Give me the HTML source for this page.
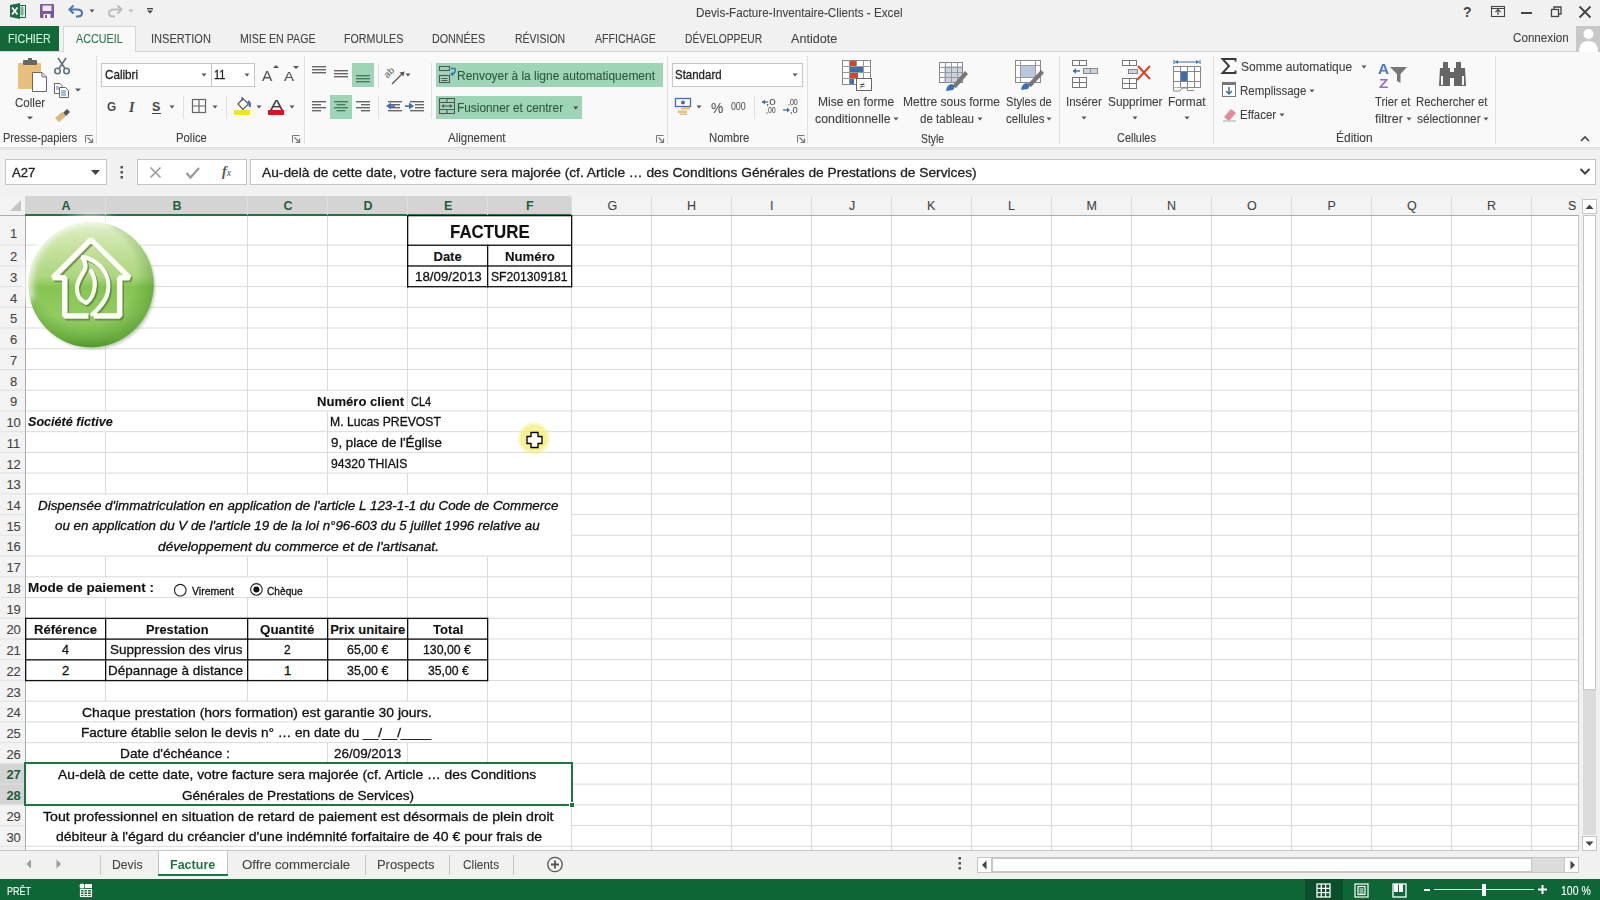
<!DOCTYPE html>
<html><head><meta charset="utf-8"><title>Excel</title>
<style>
html,body{margin:0;padding:0;}
body{width:1600px;height:900px;overflow:hidden;position:relative;background:#f1f1f1;font-family:'Liberation Sans', sans-serif;}
.t{position:absolute;white-space:nowrap;line-height:0;transform-origin:0 0;}
svg{overflow:visible}
</style></head><body>
<div style="position:absolute;left:0px;top:0px;width:1600px;height:26px;background:#f1f1f1"></div>
<div style="position:absolute;left:0px;top:26px;width:1600px;height:26px;background:#f1f1f1"></div>
<div style="position:absolute;left:0px;top:51px;width:1600px;height:1px;background:#d6d6d6"></div>
<div style="position:absolute;left:0px;top:52px;width:1600px;height:96px;background:#f9f9f9"></div>
<div style="position:absolute;left:0px;top:147px;width:1600px;height:1px;background:#dcdcdc"></div>
<div style="position:absolute;left:0px;top:148px;width:1600px;height:2px;background:#e8e8e8"></div>
<div style="position:absolute;left:0px;top:150px;width:1600px;height:46px;background:#f1f1f1"></div>
<div class="t" style="left:695.70px;top:13.34px;font-size:12px;font-weight:normal;font-style:normal;color:#444;transform:scaleX(0.9740);-webkit-text-stroke:0.1px #444;">Devis-Facture-Inventaire-Clients - Excel</div>
<div style="position:absolute;left:0px;top:26px;width:59px;height:25px;background:#11693a"></div>
<div class="t" style="left:7.68px;top:39.25px;font-size:13px;font-weight:normal;font-style:normal;color:#d6f3df;transform:scaleX(0.8200);-webkit-text-stroke:0.1px #d6f3df;">FICHIER</div>
<div style="position:absolute;left:63px;top:26px;width:73px;height:26px;background:#f9f9f9;border:1px solid #d6d6d6;border-bottom:none;box-sizing:border-box"></div>
<div class="t" style="left:76.00px;top:39.25px;font-size:13px;font-weight:normal;font-style:normal;color:#2b7a4b;transform:scaleX(0.8286);-webkit-text-stroke:0.1px #2b7a4b;">ACCUEIL</div>
<div class="t" style="left:150.90px;top:39.25px;font-size:13px;font-weight:normal;font-style:normal;color:#444;transform:scaleX(0.8495);-webkit-text-stroke:0.1px #444;">INSERTION</div>
<div class="t" style="left:239.68px;top:39.25px;font-size:13px;font-weight:normal;font-style:normal;color:#444;transform:scaleX(0.8192);-webkit-text-stroke:0.1px #444;">MISE EN PAGE</div>
<div class="t" style="left:344.18px;top:39.25px;font-size:13px;font-weight:normal;font-style:normal;color:#444;transform:scaleX(0.8210);-webkit-text-stroke:0.1px #444;">FORMULES</div>
<div class="t" style="left:432.17px;top:39.25px;font-size:13px;font-weight:normal;font-style:normal;color:#444;transform:scaleX(0.8252);-webkit-text-stroke:0.1px #444;">DONNÉES</div>
<div class="t" style="left:514.69px;top:39.25px;font-size:13px;font-weight:normal;font-style:normal;color:#444;transform:scaleX(0.8068);-webkit-text-stroke:0.1px #444;">RÉVISION</div>
<div class="t" style="left:594.50px;top:39.25px;font-size:13px;font-weight:normal;font-style:normal;color:#444;transform:scaleX(0.8163);-webkit-text-stroke:0.1px #444;">AFFICHAGE</div>
<div class="t" style="left:684.71px;top:39.25px;font-size:13px;font-weight:normal;font-style:normal;color:#444;transform:scaleX(0.7905);-webkit-text-stroke:0.1px #444;">DÉVELOPPEUR</div>
<div class="t" style="left:791.00px;top:39.25px;font-size:13px;font-weight:normal;font-style:normal;color:#444;transform:scaleX(0.9690);-webkit-text-stroke:0.1px #444;">Antidote</div>
<div class="t" style="left:1512.50px;top:38.00px;font-size:13px;font-weight:normal;font-style:normal;color:#444;transform:scaleX(0.8962);-webkit-text-stroke:0.1px #444;">Connexion</div>
<div style="position:absolute;left:0px;top:196px;width:1579px;height:655px;background:#fff"></div>
<div style="position:absolute;left:0px;top:196px;width:1579px;height:20px;background:#f3f3f3"></div>
<div style="position:absolute;left:25px;top:196px;width:546px;height:19px;background:#d4d4d4"></div>
<div style="position:absolute;left:25px;top:214px;width:546px;height:2px;background:#217346"></div>
<div style="position:absolute;left:571px;top:215px;width:1008px;height:1px;background:#ababab"></div>
<div style="position:absolute;left:0px;top:215px;width:25px;height:1px;background:#ababab"></div>
<div style="position:absolute;left:0px;top:216px;width:25px;height:635px;background:#f3f3f3"></div>
<div style="position:absolute;left:25px;top:216px;width:1px;height:635px;background:#ababab"></div>
<div style="position:absolute;left:0px;top:763.85px;width:25px;height:41.460000000000036px;background:#d4d4d4"></div>
<svg style="position:absolute;left:10px;top:200px" width="12" height="12" viewBox="0 0 12 12"><path d="M11 0 L11 11 L0 11 Z" fill="#c4c4c4"/></svg>
<svg style="position:absolute;left:0px;top:0px" width="1600" height="900" viewBox="0 0 1600 900"><g fill="#dadada"><rect x="26" y="244.6" width="1553" height="1"/><rect x="26" y="265.33" width="1553" height="1"/><rect x="26" y="286.06" width="1553" height="1"/><rect x="26" y="306.79" width="1553" height="1"/><rect x="26" y="327.52" width="1553" height="1"/><rect x="26" y="348.25" width="1553" height="1"/><rect x="26" y="368.98" width="1553" height="1"/><rect x="26" y="389.71" width="1553" height="1"/><rect x="26" y="410.44" width="1553" height="1"/><rect x="26" y="431.17" width="1553" height="1"/><rect x="26" y="451.9" width="1553" height="1"/><rect x="26" y="472.63" width="1553" height="1"/><rect x="26" y="493.36" width="1553" height="1"/><rect x="571" y="514.09" width="1008" height="1"/><rect x="571" y="534.82" width="1008" height="1"/><rect x="26" y="555.55" width="1553" height="1"/><rect x="26" y="576.28" width="1553" height="1"/><rect x="26" y="597.01" width="1553" height="1"/><rect x="26" y="617.74" width="1553" height="1"/><rect x="26" y="638.47" width="1553" height="1"/><rect x="26" y="659.2" width="1553" height="1"/><rect x="26" y="679.93" width="1553" height="1"/><rect x="26" y="700.66" width="1553" height="1"/><rect x="26" y="721.39" width="1553" height="1"/><rect x="26" y="742.12" width="1553" height="1"/><rect x="26" y="762.85" width="1553" height="1"/><rect x="571" y="783.58" width="1008" height="1"/><rect x="26" y="804.31" width="1553" height="1"/><rect x="571" y="825.04" width="1008" height="1"/><rect x="26" y="845.77" width="1553" height="1"/><rect x="105" y="216.00" width="1" height="195.44"/><rect x="105" y="432.17" width="1" height="62.19"/><rect x="105" y="556.55" width="1" height="20.73"/><rect x="105" y="598.01" width="1" height="103.65"/><rect x="247" y="216.00" width="1" height="278.36"/><rect x="247" y="556.55" width="1" height="20.73"/><rect x="247" y="598.01" width="1" height="103.65"/><rect x="327" y="216.00" width="1" height="174.71"/><rect x="327" y="411.44" width="1" height="82.92"/><rect x="327" y="556.55" width="1" height="145.11"/><rect x="327" y="743.12" width="1" height="20.73"/><rect x="407" y="216.00" width="1" height="195.44"/><rect x="407" y="473.63" width="1" height="20.73"/><rect x="407" y="556.55" width="1" height="145.11"/><rect x="407" y="743.12" width="1" height="20.73"/><rect x="487" y="245.60" width="1" height="248.76"/><rect x="487" y="556.55" width="1" height="207.30"/><rect x="571" y="216.00" width="1" height="635.00"/><rect x="651" y="216.00" width="1" height="635.00"/><rect x="731" y="216.00" width="1" height="635.00"/><rect x="811" y="216.00" width="1" height="635.00"/><rect x="891" y="216.00" width="1" height="635.00"/><rect x="971" y="216.00" width="1" height="635.00"/><rect x="1051" y="216.00" width="1" height="635.00"/><rect x="1131" y="216.00" width="1" height="635.00"/><rect x="1211" y="216.00" width="1" height="635.00"/><rect x="1291" y="216.00" width="1" height="635.00"/><rect x="1371" y="216.00" width="1" height="635.00"/><rect x="1451" y="216.00" width="1" height="635.00"/><rect x="1531" y="216.00" width="1" height="635.00"/></g></svg>
<svg style="position:absolute;left:0px;top:0px" width="1600" height="900" viewBox="0 0 1600 900"><g fill="#e1e1e1"><rect x="0" y="244.6" width="25" height="1"/><rect x="0" y="265.33" width="25" height="1"/><rect x="0" y="286.06" width="25" height="1"/><rect x="0" y="306.79" width="25" height="1"/><rect x="0" y="327.52" width="25" height="1"/><rect x="0" y="348.25" width="25" height="1"/><rect x="0" y="368.98" width="25" height="1"/><rect x="0" y="389.71" width="25" height="1"/><rect x="0" y="410.44" width="25" height="1"/><rect x="0" y="431.17" width="25" height="1"/><rect x="0" y="451.9" width="25" height="1"/><rect x="0" y="472.63" width="25" height="1"/><rect x="0" y="493.36" width="25" height="1"/><rect x="0" y="514.09" width="25" height="1"/><rect x="0" y="534.82" width="25" height="1"/><rect x="0" y="555.55" width="25" height="1"/><rect x="0" y="576.28" width="25" height="1"/><rect x="0" y="597.01" width="25" height="1"/><rect x="0" y="617.74" width="25" height="1"/><rect x="0" y="638.47" width="25" height="1"/><rect x="0" y="659.2" width="25" height="1"/><rect x="0" y="679.93" width="25" height="1"/><rect x="0" y="700.66" width="25" height="1"/><rect x="0" y="721.39" width="25" height="1"/><rect x="0" y="742.12" width="25" height="1"/><rect x="0" y="762.85" width="25" height="1"/><rect x="0" y="783.58" width="25" height="1"/><rect x="0" y="804.31" width="25" height="1"/><rect x="0" y="825.04" width="25" height="1"/><rect x="0" y="845.77" width="25" height="1"/></g></svg>
<svg style="position:absolute;left:0px;top:0px" width="1600" height="900" viewBox="0 0 1600 900"><g fill="#dcdcdc"><rect x="105" y="197" width="1" height="18"/><rect x="247" y="197" width="1" height="18"/><rect x="327" y="197" width="1" height="18"/><rect x="407" y="197" width="1" height="18"/><rect x="487" y="197" width="1" height="18"/><rect x="571" y="197" width="1" height="18"/><rect x="651" y="197" width="1" height="18"/><rect x="731" y="197" width="1" height="18"/><rect x="811" y="197" width="1" height="18"/><rect x="891" y="197" width="1" height="18"/><rect x="971" y="197" width="1" height="18"/><rect x="1051" y="197" width="1" height="18"/><rect x="1131" y="197" width="1" height="18"/><rect x="1211" y="197" width="1" height="18"/><rect x="1291" y="197" width="1" height="18"/><rect x="1371" y="197" width="1" height="18"/><rect x="1451" y="197" width="1" height="18"/><rect x="1531" y="197" width="1" height="18"/></g></svg>
<div class="t" style="left:61.50px;top:205.67px;font-size:12.5px;font-weight:bold;font-style:normal;color:#1f5e3d;">A</div>
<div class="t" style="left:172.50px;top:205.67px;font-size:12.5px;font-weight:bold;font-style:normal;color:#1f5e3d;">B</div>
<div class="t" style="left:283.50px;top:205.67px;font-size:12.5px;font-weight:bold;font-style:normal;color:#1f5e3d;">C</div>
<div class="t" style="left:363.50px;top:205.67px;font-size:12.5px;font-weight:bold;font-style:normal;color:#1f5e3d;">D</div>
<div class="t" style="left:444.00px;top:205.67px;font-size:12.5px;font-weight:bold;font-style:normal;color:#1f5e3d;">E</div>
<div class="t" style="left:526.00px;top:205.67px;font-size:12.5px;font-weight:bold;font-style:normal;color:#1f5e3d;">F</div>
<div class="t" style="left:607.50px;top:205.67px;font-size:12.5px;font-weight:normal;font-style:normal;color:#444;-webkit-text-stroke:0.1px #444;">G</div>
<div class="t" style="left:687.00px;top:205.67px;font-size:12.5px;font-weight:normal;font-style:normal;color:#444;-webkit-text-stroke:0.1px #444;">H</div>
<div class="t" style="left:770.00px;top:205.67px;font-size:12.5px;font-weight:normal;font-style:normal;color:#444;-webkit-text-stroke:0.1px #444;">I</div>
<div class="t" style="left:849.00px;top:205.67px;font-size:12.5px;font-weight:normal;font-style:normal;color:#444;-webkit-text-stroke:0.1px #444;">J</div>
<div class="t" style="left:927.00px;top:205.67px;font-size:12.5px;font-weight:normal;font-style:normal;color:#444;-webkit-text-stroke:0.1px #444;">K</div>
<div class="t" style="left:1008.00px;top:205.67px;font-size:12.5px;font-weight:normal;font-style:normal;color:#444;-webkit-text-stroke:0.1px #444;">L</div>
<div class="t" style="left:1086.50px;top:205.67px;font-size:12.5px;font-weight:normal;font-style:normal;color:#444;-webkit-text-stroke:0.1px #444;">M</div>
<div class="t" style="left:1167.00px;top:205.67px;font-size:12.5px;font-weight:normal;font-style:normal;color:#444;-webkit-text-stroke:0.1px #444;">N</div>
<div class="t" style="left:1247.00px;top:205.67px;font-size:12.5px;font-weight:normal;font-style:normal;color:#444;-webkit-text-stroke:0.1px #444;">O</div>
<div class="t" style="left:1327.50px;top:205.67px;font-size:12.5px;font-weight:normal;font-style:normal;color:#444;-webkit-text-stroke:0.1px #444;">P</div>
<div class="t" style="left:1407.00px;top:205.67px;font-size:12.5px;font-weight:normal;font-style:normal;color:#444;-webkit-text-stroke:0.1px #444;">Q</div>
<div class="t" style="left:1487.00px;top:205.67px;font-size:12.5px;font-weight:normal;font-style:normal;color:#444;-webkit-text-stroke:0.1px #444;">R</div>
<div class="t" style="left:1568.00px;top:205.67px;font-size:12.5px;font-weight:normal;font-style:normal;color:#444;-webkit-text-stroke:0.1px #444;">S</div>
<div class="t" style="left:10.00px;top:233.50px;font-size:13px;font-weight:normal;font-style:normal;color:#444;-webkit-text-stroke:0.1px #444;">1</div>
<div class="t" style="left:10.00px;top:257.23px;font-size:13px;font-weight:normal;font-style:normal;color:#444;-webkit-text-stroke:0.1px #444;">2</div>
<div class="t" style="left:10.00px;top:277.96px;font-size:13px;font-weight:normal;font-style:normal;color:#444;-webkit-text-stroke:0.1px #444;">3</div>
<div class="t" style="left:10.00px;top:298.69px;font-size:13px;font-weight:normal;font-style:normal;color:#444;-webkit-text-stroke:0.1px #444;">4</div>
<div class="t" style="left:10.00px;top:319.42px;font-size:13px;font-weight:normal;font-style:normal;color:#444;-webkit-text-stroke:0.1px #444;">5</div>
<div class="t" style="left:10.00px;top:340.15px;font-size:13px;font-weight:normal;font-style:normal;color:#444;-webkit-text-stroke:0.1px #444;">6</div>
<div class="t" style="left:10.00px;top:360.88px;font-size:13px;font-weight:normal;font-style:normal;color:#444;-webkit-text-stroke:0.1px #444;">7</div>
<div class="t" style="left:10.00px;top:381.61px;font-size:13px;font-weight:normal;font-style:normal;color:#444;-webkit-text-stroke:0.1px #444;">8</div>
<div class="t" style="left:10.00px;top:402.34px;font-size:13px;font-weight:normal;font-style:normal;color:#444;-webkit-text-stroke:0.1px #444;">9</div>
<div class="t" style="left:6.39px;top:423.07px;font-size:13px;font-weight:normal;font-style:normal;color:#444;-webkit-text-stroke:0.1px #444;">10</div>
<div class="t" style="left:6.87px;top:443.80px;font-size:13px;font-weight:normal;font-style:normal;color:#444;-webkit-text-stroke:0.1px #444;">11</div>
<div class="t" style="left:6.39px;top:464.53px;font-size:13px;font-weight:normal;font-style:normal;color:#444;-webkit-text-stroke:0.1px #444;">12</div>
<div class="t" style="left:6.39px;top:485.26px;font-size:13px;font-weight:normal;font-style:normal;color:#444;-webkit-text-stroke:0.1px #444;">13</div>
<div class="t" style="left:6.39px;top:505.99px;font-size:13px;font-weight:normal;font-style:normal;color:#444;-webkit-text-stroke:0.1px #444;">14</div>
<div class="t" style="left:6.39px;top:526.72px;font-size:13px;font-weight:normal;font-style:normal;color:#444;-webkit-text-stroke:0.1px #444;">15</div>
<div class="t" style="left:6.39px;top:547.45px;font-size:13px;font-weight:normal;font-style:normal;color:#444;-webkit-text-stroke:0.1px #444;">16</div>
<div class="t" style="left:6.39px;top:568.18px;font-size:13px;font-weight:normal;font-style:normal;color:#444;-webkit-text-stroke:0.1px #444;">17</div>
<div class="t" style="left:6.39px;top:588.91px;font-size:13px;font-weight:normal;font-style:normal;color:#444;-webkit-text-stroke:0.1px #444;">18</div>
<div class="t" style="left:6.39px;top:609.64px;font-size:13px;font-weight:normal;font-style:normal;color:#444;-webkit-text-stroke:0.1px #444;">19</div>
<div class="t" style="left:6.39px;top:630.37px;font-size:13px;font-weight:normal;font-style:normal;color:#444;-webkit-text-stroke:0.1px #444;">20</div>
<div class="t" style="left:6.39px;top:651.10px;font-size:13px;font-weight:normal;font-style:normal;color:#444;-webkit-text-stroke:0.1px #444;">21</div>
<div class="t" style="left:6.39px;top:671.83px;font-size:13px;font-weight:normal;font-style:normal;color:#444;-webkit-text-stroke:0.1px #444;">22</div>
<div class="t" style="left:6.39px;top:692.56px;font-size:13px;font-weight:normal;font-style:normal;color:#444;-webkit-text-stroke:0.1px #444;">23</div>
<div class="t" style="left:6.39px;top:713.29px;font-size:13px;font-weight:normal;font-style:normal;color:#444;-webkit-text-stroke:0.1px #444;">24</div>
<div class="t" style="left:6.39px;top:734.02px;font-size:13px;font-weight:normal;font-style:normal;color:#444;-webkit-text-stroke:0.1px #444;">25</div>
<div class="t" style="left:6.39px;top:754.75px;font-size:13px;font-weight:normal;font-style:normal;color:#444;-webkit-text-stroke:0.1px #444;">26</div>
<div class="t" style="left:6.39px;top:775.48px;font-size:13px;font-weight:bold;font-style:normal;color:#1f5e3d;">27</div>
<div class="t" style="left:6.39px;top:796.21px;font-size:13px;font-weight:bold;font-style:normal;color:#1f5e3d;">28</div>
<div class="t" style="left:6.39px;top:816.94px;font-size:13px;font-weight:normal;font-style:normal;color:#444;-webkit-text-stroke:0.1px #444;">29</div>
<div class="t" style="left:6.39px;top:837.67px;font-size:13px;font-weight:normal;font-style:normal;color:#444;-webkit-text-stroke:0.1px #444;">30</div>
<svg style="position:absolute;left:0px;top:0px" width="1600" height="900" viewBox="0 0 1600 900"><g fill="#111"><rect x="407" y="215.00" width="165" height="1.3"/><rect x="407" y="244.60" width="165" height="1.3"/><rect x="407" y="265.33" width="165" height="1.3"/><rect x="407" y="286.06" width="165" height="1.3"/><rect x="407" y="215.00" width="1.3" height="72.36"/><rect x="571" y="215.00" width="1.3" height="72.36"/><rect x="487" y="244.60" width="1.3" height="42.76"/><rect x="25" y="617.74" width="463" height="1.3"/><rect x="25" y="638.47" width="463" height="1.3"/><rect x="25" y="659.20" width="463" height="1.3"/><rect x="25" y="679.93" width="463" height="1.3"/><rect x="25" y="617.74" width="1.3" height="63.49"/><rect x="105" y="617.74" width="1.3" height="63.49"/><rect x="247" y="617.74" width="1.3" height="63.49"/><rect x="327" y="617.74" width="1.3" height="63.49"/><rect x="407" y="617.74" width="1.3" height="63.49"/><rect x="487" y="617.74" width="1.3" height="63.49"/></g></svg>
<div class="t" style="left:450.31px;top:231.86px;font-size:18px;font-weight:bold;font-style:normal;color:#111;transform:scaleX(0.9376);-webkit-text-stroke:0.1px #111;">FACTURE</div>
<div class="t" style="left:433.50px;top:256.50px;font-size:13px;font-weight:bold;font-style:normal;color:#111;-webkit-text-stroke:0.1px #111;">Date</div>
<div class="t" style="left:504.75px;top:256.50px;font-size:13px;font-weight:bold;font-style:normal;color:#111;transform:scaleX(1.0167);-webkit-text-stroke:0.1px #111;">Numéro</div>
<div class="t" style="left:414.75px;top:277.40px;font-size:13px;font-weight:normal;font-style:normal;color:#111;transform:scaleX(1.0257);-webkit-text-stroke:0.3px #111;">18/09/2013</div>
<div class="t" style="left:491.00px;top:277.40px;font-size:13px;font-weight:normal;font-style:normal;color:#111;transform:scaleX(0.9361);-webkit-text-stroke:0.3px #111;">SF201309181</div>
<div class="t" style="left:316.90px;top:401.75px;font-size:13px;font-weight:bold;font-style:normal;color:#111;transform:scaleX(1.0057);-webkit-text-stroke:0.1px #111;">Numéro client</div>
<div class="t" style="left:410.60px;top:401.75px;font-size:13px;font-weight:normal;font-style:normal;color:#111;transform:scaleX(0.8468);-webkit-text-stroke:0.3px #111;">CL4</div>
<div class="t" style="left:28.00px;top:422.10px;font-size:13px;font-weight:bold;font-style:italic;color:#111;transform:scaleX(0.9691);-webkit-text-stroke:0.1px #111;">Société fictive</div>
<div class="t" style="left:329.66px;top:422.40px;font-size:13px;font-weight:normal;font-style:normal;color:#111;transform:scaleX(0.9359);-webkit-text-stroke:0.3px #111;">M. Lucas PREVOST</div>
<div class="t" style="left:330.60px;top:443.25px;font-size:13px;font-weight:normal;font-style:normal;color:#111;transform:scaleX(1.0268);-webkit-text-stroke:0.3px #111;">9, place de l'Église</div>
<div class="t" style="left:330.60px;top:463.50px;font-size:13px;font-weight:normal;font-style:normal;color:#111;transform:scaleX(0.9380);-webkit-text-stroke:0.3px #111;">94320 THIAIS</div>
<div class="t" style="left:37.50px;top:505.50px;font-size:13px;font-weight:normal;font-style:italic;color:#111;transform:scaleX(1.0310);-webkit-text-stroke:0.3px #111;">Dispensée d'immatriculation en application de l'article L 123-1-1 du Code de Commerce</div>
<div class="t" style="left:55.30px;top:526.10px;font-size:13px;font-weight:normal;font-style:italic;color:#111;transform:scaleX(1.0275);-webkit-text-stroke:0.3px #111;">ou en application du V de l'article 19 de la loi n°96-603 du 5 juillet 1996 relative au</div>
<div class="t" style="left:157.50px;top:546.75px;font-size:13px;font-weight:normal;font-style:italic;color:#111;transform:scaleX(1.0552);-webkit-text-stroke:0.3px #111;">développement du commerce et de l'artisanat.</div>
<div class="t" style="left:28.00px;top:588.00px;font-size:13px;font-weight:bold;font-style:normal;color:#111;transform:scaleX(1.0391);-webkit-text-stroke:0.1px #111;">Mode de paiement :</div>
<div class="t" style="left:191.60px;top:590.89px;font-size:11px;font-weight:normal;font-style:normal;color:#111;transform:scaleX(0.9552);-webkit-text-stroke:0.3px #111;">Virement</div>
<div class="t" style="left:267.30px;top:590.69px;font-size:11px;font-weight:normal;font-style:normal;color:#111;transform:scaleX(0.9241);-webkit-text-stroke:0.3px #111;">Chèque</div>
<svg style="position:absolute;left:170px;top:580px" width="20" height="20" viewBox="0 0 20 20"><circle cx="10.3" cy="10.2" r="5.8" fill="#fff" stroke="#222" stroke-width="1.1"/></svg>
<svg style="position:absolute;left:246px;top:579px" width="20" height="20" viewBox="0 0 20 20"><circle cx="10.4" cy="10.4" r="5.8" fill="#fff" stroke="#222" stroke-width="1.1"/><circle cx="10.4" cy="10.4" r="3" fill="#111"/></svg>
<div class="t" style="left:34.40px;top:629.70px;font-size:13px;font-weight:bold;font-style:normal;color:#111;transform:scaleX(1.0042);-webkit-text-stroke:0.1px #111;">Référence</div>
<div class="t" style="left:145.80px;top:629.70px;font-size:13px;font-weight:bold;font-style:normal;color:#111;transform:scaleX(0.9822);-webkit-text-stroke:0.1px #111;">Prestation</div>
<div class="t" style="left:260.30px;top:629.70px;font-size:13px;font-weight:bold;font-style:normal;color:#111;transform:scaleX(1.0306);-webkit-text-stroke:0.1px #111;">Quantité</div>
<div class="t" style="left:330.20px;top:629.70px;font-size:13px;font-weight:bold;font-style:normal;color:#111;-webkit-text-stroke:0.1px #111;">Prix unitaire</div>
<div class="t" style="left:432.60px;top:629.70px;font-size:13px;font-weight:bold;font-style:normal;color:#111;transform:scaleX(1.0076);-webkit-text-stroke:0.1px #111;">Total</div>
<div class="t" style="left:62.00px;top:650.00px;font-size:13px;font-weight:normal;font-style:normal;color:#111;transform:scaleX(0.9643);-webkit-text-stroke:0.3px #111;">4</div>
<div class="t" style="left:110.30px;top:650.00px;font-size:13px;font-weight:normal;font-style:normal;color:#111;transform:scaleX(1.0366);-webkit-text-stroke:0.3px #111;">Suppression des virus</div>
<div class="t" style="left:284.00px;top:650.00px;font-size:13px;font-weight:normal;font-style:normal;color:#111;transform:scaleX(0.9286);-webkit-text-stroke:0.3px #111;">2</div>
<div class="t" style="left:347.20px;top:650.00px;font-size:13px;font-weight:normal;font-style:normal;color:#111;transform:scaleX(0.9514);-webkit-text-stroke:0.3px #111;">65,00 €</div>
<div class="t" style="left:423.30px;top:650.00px;font-size:13px;font-weight:normal;font-style:normal;color:#111;transform:scaleX(0.9480);-webkit-text-stroke:0.3px #111;">130,00 €</div>
<div class="t" style="left:62.00px;top:670.80px;font-size:13px;font-weight:normal;font-style:normal;color:#111;-webkit-text-stroke:0.3px #111;">2</div>
<div class="t" style="left:108.36px;top:670.80px;font-size:13px;font-weight:normal;font-style:normal;color:#111;transform:scaleX(1.0375);-webkit-text-stroke:0.3px #111;">Dépannage à distance</div>
<div class="t" style="left:284.00px;top:670.80px;font-size:13px;font-weight:normal;font-style:normal;color:#111;-webkit-text-stroke:0.3px #111;">1</div>
<div class="t" style="left:347.00px;top:670.80px;font-size:13px;font-weight:normal;font-style:normal;color:#111;transform:scaleX(0.9514);-webkit-text-stroke:0.3px #111;">35,00 €</div>
<div class="t" style="left:427.70px;top:670.80px;font-size:13px;font-weight:normal;font-style:normal;color:#111;transform:scaleX(0.9378);-webkit-text-stroke:0.3px #111;">35,00 €</div>
<div class="t" style="left:82.10px;top:712.60px;font-size:13px;font-weight:normal;font-style:normal;color:#111;transform:scaleX(1.0714);-webkit-text-stroke:0.3px #111;">Chaque prestation (hors formation) est garantie 30 jours.</div>
<div class="t" style="left:81.05px;top:733.25px;font-size:13px;font-weight:normal;font-style:normal;color:#111;transform:scaleX(1.0460);-webkit-text-stroke:0.3px #111;">Facture établie selon le devis n° … en date du __/__/____</div>
<div class="t" style="left:120.45px;top:753.90px;font-size:13px;font-weight:normal;font-style:normal;color:#111;transform:scaleX(1.0528);-webkit-text-stroke:0.3px #111;">Date d'échéance :</div>
<div class="t" style="left:334.40px;top:753.90px;font-size:13px;font-weight:normal;font-style:normal;color:#111;transform:scaleX(1.0334);-webkit-text-stroke:0.3px #111;">26/09/2013</div>
<div class="t" style="left:58.40px;top:775.20px;font-size:13px;font-weight:normal;font-style:normal;color:#111;transform:scaleX(1.0637);-webkit-text-stroke:0.3px #111;">Au-delà de cette date, votre facture sera majorée (cf. Article … des Conditions</div>
<div class="t" style="left:182.20px;top:795.80px;font-size:13px;font-weight:normal;font-style:normal;color:#111;transform:scaleX(1.0422);-webkit-text-stroke:0.3px #111;">Générales de Prestations de Services)</div>
<div class="t" style="left:42.50px;top:816.50px;font-size:13px;font-weight:normal;font-style:normal;color:#111;transform:scaleX(1.0886);-webkit-text-stroke:0.3px #111;">Tout professionnel en situation de retard de paiement est désormais de plein droit</div>
<div class="t" style="left:55.60px;top:837.10px;font-size:13px;font-weight:normal;font-style:normal;color:#111;transform:scaleX(1.0783);-webkit-text-stroke:0.3px #111;">débiteur à l'égard du créancier d'une indémnité forfaitaire de 40 € pour frais de</div>
<div style="position:absolute;left:24px;top:762px;width:549px;height:44px;border:2px solid #217346;box-sizing:border-box"></div>
<div style="position:absolute;left:569px;top:802px;width:6px;height:6px;background:#217346;border:1px solid #fff;box-sizing:border-box"></div>
<div style="position:absolute;left:5px;top:159px;width:102px;height:26px;background:#fff;border:1px solid #c6c6c6;box-sizing:border-box"></div>
<div class="t" style="left:12.00px;top:172.50px;font-size:13px;font-weight:normal;font-style:normal;color:#222;transform:scaleX(1.0043);-webkit-text-stroke:0.3px #222;">A27</div>
<svg style="position:absolute;left:91px;top:170px" width="10" height="6" viewBox="0 0 10 6"><path d="M0 0 L9 0 L4.5 5 Z" fill="#444"/></svg>
<svg style="position:absolute;left:120px;top:166px" width="4" height="16" viewBox="0 0 4 16"><rect x="0.5" y="0" width="2.5" height="2.5" fill="#555"/><rect x="0.5" y="5" width="2.5" height="2.5" fill="#555"/><rect x="0.5" y="10" width="2.5" height="2.5" fill="#555"/></svg>
<div style="position:absolute;left:137px;top:159px;width:110px;height:26px;background:#fff;border:1px solid #c6c6c6;box-sizing:border-box"></div>
<svg style="position:absolute;left:149px;top:166px" width="14" height="14" viewBox="0 0 14 14"><path d="M1.5 1.5 L11.5 11.5 M11.5 1.5 L1.5 11.5" stroke="#9a9a9a" stroke-width="1.6"/></svg>
<svg style="position:absolute;left:185px;top:166px" width="16" height="14" viewBox="0 0 16 14"><path d="M1.5 7 L5.5 11.5 L14 2" stroke="#9a9a9a" stroke-width="2.2" fill="none"/></svg>
<div style="position:absolute;left:222px;top:163px;font:italic bold 14px 'Liberation Serif',serif;color:#555;line-height:18px">f<span style="font-size:10px;font-weight:normal">x</span></div>
<div style="position:absolute;left:250px;top:159px;width:1346px;height:26px;background:#fff;border:1px solid #c6c6c6;box-sizing:border-box"></div>
<div class="t" style="left:262.00px;top:172.50px;font-size:13px;font-weight:normal;font-style:normal;color:#222;transform:scaleX(1.0577);-webkit-text-stroke:0.3px #222;">Au-delà de cette date, votre facture sera majorée (cf. Article … des Conditions Générales de Prestations de Services)</div>
<svg style="position:absolute;left:1579px;top:167px" width="12" height="10" viewBox="0 0 12 10"><path d="M1.5 2 L6 6.5 L10.5 2" stroke="#444" stroke-width="2" fill="none"/></svg>
<div style="position:absolute;left:1579px;top:196px;width:21px;height:655px;background:#f1f1f1"></div>
<div style="position:absolute;left:1578px;top:216px;width:1px;height:635px;background:#c6c6c6"></div>
<div style="position:absolute;left:1582px;top:199px;width:15px;height:15px;background:#fff;border:1px solid #c6c6c6;box-sizing:border-box"></div>
<svg style="position:absolute;left:1585px;top:204px" width="10" height="6" viewBox="0 0 10 6"><path d="M0.5 5 L8.5 5 L4.5 0.5 Z" fill="#444"/></svg>
<div style="position:absolute;left:1583px;top:215px;width:13px;height:620px;background:#dcdcdc"></div>
<div style="position:absolute;left:1583px;top:215px;width:13px;height:475px;background:#fff;border:1px solid #c6c6c6;box-sizing:border-box"></div>
<div style="position:absolute;left:1582px;top:836px;width:15px;height:15px;background:#fff;border:1px solid #c6c6c6;box-sizing:border-box"></div>
<svg style="position:absolute;left:1585px;top:841px" width="10" height="6" viewBox="0 0 10 6"><path d="M0.5 0.5 L8.5 0.5 L4.5 5 Z" fill="#444"/></svg>
<div style="position:absolute;left:0px;top:851px;width:1600px;height:28px;background:#f1f1f1"></div>
<div style="position:absolute;left:0px;top:850px;width:1579px;height:1px;background:#c6c6c6"></div>
<svg style="position:absolute;left:25px;top:859px" width="8" height="10" viewBox="0 0 8 10"><path d="M6 0.5 L6 9.5 L1.5 5 Z" fill="#9b9b9b"/></svg>
<svg style="position:absolute;left:55px;top:859px" width="8" height="10" viewBox="0 0 8 10"><path d="M1.5 0.5 L1.5 9.5 L6 5 Z" fill="#9b9b9b"/></svg>
<div style="position:absolute;left:100px;top:855px;width:1px;height:20px;background:#c6c6c6"></div>
<div style="position:absolute;left:365px;top:855px;width:1px;height:20px;background:#c6c6c6"></div>
<div style="position:absolute;left:449px;top:855px;width:1px;height:20px;background:#c6c6c6"></div>
<div style="position:absolute;left:513px;top:855px;width:1px;height:20px;background:#c6c6c6"></div>
<div style="position:absolute;left:158px;top:851px;width:70px;height:25px;background:#fff;border-left:1px solid #c6c6c6;border-right:1px solid #c6c6c6;box-sizing:border-box"></div>
<div style="position:absolute;left:158px;top:874px;width:70px;height:2px;background:#217346"></div>
<div class="t" style="left:112.06px;top:864.50px;font-size:13px;font-weight:normal;font-style:normal;color:#444;transform:scaleX(0.9373);-webkit-text-stroke:0.1px #444;">Devis</div>
<div class="t" style="left:170.00px;top:864.50px;font-size:13px;font-weight:bold;font-style:normal;color:#217346;transform:scaleX(0.9630);">Facture</div>
<div class="t" style="left:242.00px;top:864.50px;font-size:13px;font-weight:normal;font-style:normal;color:#444;transform:scaleX(1.0215);-webkit-text-stroke:0.1px #444;">Offre commerciale</div>
<div class="t" style="left:377.01px;top:864.50px;font-size:13px;font-weight:normal;font-style:normal;color:#444;transform:scaleX(0.9947);-webkit-text-stroke:0.1px #444;">Prospects</div>
<div class="t" style="left:462.50px;top:864.50px;font-size:13px;font-weight:normal;font-style:normal;color:#444;transform:scaleX(0.9071);-webkit-text-stroke:0.1px #444;">Clients</div>
<svg style="position:absolute;left:546px;top:856px" width="18" height="18" viewBox="0 0 18 18"><circle cx="9" cy="8.5" r="7.2" fill="none" stroke="#555" stroke-width="1.3"/><path d="M9 4.5 L9 12.5 M5 8.5 L13 8.5" stroke="#555" stroke-width="1.8"/></svg>
<svg style="position:absolute;left:958px;top:857px" width="4" height="16" viewBox="0 0 4 16"><rect x="0.5" y="0" width="2.5" height="2.5" fill="#555"/><rect x="0.5" y="5" width="2.5" height="2.5" fill="#555"/><rect x="0.5" y="10" width="2.5" height="2.5" fill="#555"/></svg>
<div style="position:absolute;left:977px;top:857px;width:602px;height:16px;background:#fff;border:1px solid #c6c6c6;box-sizing:border-box"></div>
<div style="position:absolute;left:992px;top:858px;width:540px;height:14px;background:#fff;border:1px solid #c6c6c6;box-sizing:border-box"></div>
<div style="position:absolute;left:1532px;top:858px;width:32px;height:14px;background:#dcdcdc"></div>
<div style="position:absolute;left:977px;top:857px;width:15px;height:16px;background:#fff;border:1px solid #c6c6c6;box-sizing:border-box"></div>
<svg style="position:absolute;left:981px;top:860px" width="8" height="10" viewBox="0 0 8 10"><path d="M5.5 0.5 L5.5 9.5 L1 5 Z" fill="#444"/></svg>
<div style="position:absolute;left:1564px;top:857px;width:15px;height:16px;background:#fff;border:1px solid #c6c6c6;box-sizing:border-box"></div>
<svg style="position:absolute;left:1569px;top:860px" width="8" height="10" viewBox="0 0 8 10"><path d="M1.5 0.5 L1.5 9.5 L6 5 Z" fill="#444"/></svg>
<div style="position:absolute;left:0px;top:879px;width:1600px;height:21px;background:#0e6535"></div>
<div class="t" style="left:7.00px;top:891.02px;font-size:11.5px;font-weight:normal;font-style:normal;color:#fff;transform:scaleX(0.7831);-webkit-text-stroke:0.1px #fff;">PRÊT</div>
<svg style="position:absolute;left:79px;top:883px" width="14" height="14" viewBox="0 0 14 14"><circle cx="3" cy="3" r="2.5" fill="#fff"/><rect x="6" y="1" width="7" height="4" fill="#fff"/><rect x="1.5" y="6.5" width="11" height="7" fill="none" stroke="#fff" stroke-width="1.2"/><path d="M1.5 9 H12.5 M1.5 11.5 H12.5 M5 6.5 V13.5 M8.5 6.5 V13.5" stroke="#fff" stroke-width="0.9"/></svg>
<div style="position:absolute;left:1305px;top:879px;width:38px;height:21px;background:#0a4f29"></div>
<svg style="position:absolute;left:1316px;top:883px" width="16" height="16" viewBox="0 0 16 16"><g fill="none" stroke="#fff" stroke-width="1.3"><rect x="1" y="1" width="13" height="13"/><path d="M1 5.3 H14 M1 9.6 H14 M5.3 1 V14 M9.6 1 V14"/></g></svg>
<svg style="position:absolute;left:1354px;top:883px" width="16" height="16" viewBox="0 0 16 16"><g fill="none" stroke="#fff" stroke-width="1.2"><rect x="1" y="1" width="13" height="13"/><rect x="4" y="3.5" width="7" height="8"/><path d="M5.5 6 H9.5 M5.5 8 H9.5 M5.5 10 H9.5"/></g></svg>
<svg style="position:absolute;left:1392px;top:883px" width="16" height="16" viewBox="0 0 16 16"><g fill="none" stroke="#fff" stroke-width="1.3"><rect x="1" y="1" width="13" height="13"/></g><rect x="2" y="1" width="4" height="8" fill="#fff"/><rect x="7" y="1" width="4" height="8" fill="#fff"/></svg>
<div style="position:absolute;left:1424px;top:889px;width:6px;height:2px;background:#fff"></div>
<div style="position:absolute;left:1434px;top:889px;width:100px;height:1px;background:#d6ead9"></div>
<div style="position:absolute;left:1482px;top:884px;width:4px;height:12px;background:#fff"></div>
<svg style="position:absolute;left:1537px;top:884px" width="12" height="12" viewBox="0 0 12 12"><path d="M5.5 1 V10 M1 5.5 H10" stroke="#fff" stroke-width="2"/></svg>
<div class="t" style="left:1561.00px;top:890.84px;font-size:12px;font-weight:normal;font-style:normal;color:#fff;transform:scaleX(0.8732);-webkit-text-stroke:0.1px #fff;">100 %</div>
<div class="t" style="left:15.00px;top:102.67px;font-size:12.5px;font-weight:normal;font-style:normal;color:#404040;transform:scaleX(0.9235);-webkit-text-stroke:0.1px #404040;">Coller</div>
<div class="t" style="left:3.12px;top:138.17px;font-size:12.5px;font-weight:normal;font-style:normal;color:#404040;transform:scaleX(0.8815);-webkit-text-stroke:0.1px #404040;">Presse-papiers</div>
<div class="t" style="left:176.09px;top:138.17px;font-size:12.5px;font-weight:normal;font-style:normal;color:#404040;transform:scaleX(0.9065);-webkit-text-stroke:0.1px #404040;">Police</div>
<div class="t" style="left:448.00px;top:138.17px;font-size:12.5px;font-weight:normal;font-style:normal;color:#404040;transform:scaleX(0.9197);-webkit-text-stroke:0.1px #404040;">Alignement</div>
<div class="t" style="left:708.59px;top:138.17px;font-size:12.5px;font-weight:normal;font-style:normal;color:#404040;transform:scaleX(0.9079);-webkit-text-stroke:0.1px #404040;">Nombre</div>
<div class="t" style="left:921.00px;top:138.67px;font-size:12.5px;font-weight:normal;font-style:normal;color:#404040;transform:scaleX(0.8262);-webkit-text-stroke:0.1px #404040;">Style</div>
<div class="t" style="left:1116.50px;top:138.17px;font-size:12.5px;font-weight:normal;font-style:normal;color:#404040;transform:scaleX(0.8753);-webkit-text-stroke:0.1px #404040;">Cellules</div>
<div class="t" style="left:1335.54px;top:138.17px;font-size:12.5px;font-weight:normal;font-style:normal;color:#404040;transform:scaleX(0.9579);-webkit-text-stroke:0.1px #404040;">Édition</div>
<div style="position:absolute;left:96px;top:56px;width:1px;height:88px;background:#e0e0e0"></div>
<div style="position:absolute;left:304px;top:56px;width:1px;height:88px;background:#e0e0e0"></div>
<div style="position:absolute;left:667px;top:56px;width:1px;height:88px;background:#e0e0e0"></div>
<div style="position:absolute;left:807px;top:56px;width:1px;height:88px;background:#e0e0e0"></div>
<div style="position:absolute;left:1059px;top:56px;width:1px;height:88px;background:#e0e0e0"></div>
<div style="position:absolute;left:1213px;top:56px;width:1px;height:88px;background:#e0e0e0"></div>
<div style="position:absolute;left:1495px;top:56px;width:1px;height:88px;background:#e0e0e0"></div>
<div style="position:absolute;left:183px;top:96px;width:1px;height:23px;background:#e0e0e0"></div>
<div style="position:absolute;left:226px;top:96px;width:1px;height:23px;background:#e0e0e0"></div>
<div style="position:absolute;left:378px;top:63px;width:1px;height:25px;background:#e0e0e0"></div>
<div style="position:absolute;left:378px;top:96px;width:1px;height:23px;background:#e0e0e0"></div>
<div style="position:absolute;left:431px;top:63px;width:1px;height:56px;background:#e0e0e0"></div>
<div style="position:absolute;left:754px;top:96px;width:1px;height:23px;background:#e0e0e0"></div>
<div style="position:absolute;left:101px;top:63px;width:111px;height:24px;background:#fff;border:1px solid #c6c6c6;box-sizing:border-box"></div>
<div style="position:absolute;left:211px;top:63px;width:44px;height:24px;background:#fff;border:1px solid #c6c6c6;box-sizing:border-box"></div>
<div class="t" style="left:104.50px;top:74.80px;font-size:13px;font-weight:normal;font-style:normal;color:#222;transform:scaleX(0.8984);-webkit-text-stroke:0.3px #222;">Calibri</div>
<div class="t" style="left:214.40px;top:74.80px;font-size:13px;font-weight:normal;font-style:normal;color:#222;transform:scaleX(0.8443);-webkit-text-stroke:0.3px #222;">11</div>
<div class="t" style="left:262.00px;top:76.15px;font-size:14px;font-weight:normal;font-style:normal;color:#555;transform:scaleX(1.1000);-webkit-text-stroke:0.1px #555;">A</div>
<div class="t" style="left:284.00px;top:76.84px;font-size:12px;font-weight:normal;font-style:normal;color:#555;transform:scaleX(1.2500);-webkit-text-stroke:0.1px #555;">A</div>
<div class="t" style="left:107.00px;top:107.17px;font-size:12.5px;font-weight:bold;font-style:normal;color:#444;transform:scaleX(0.9444);">G</div>
<div class="t" style="left:152.00px;top:107.17px;font-size:12.5px;font-weight:bold;font-style:normal;color:#444;">S</div>
<div style="position:absolute;left:152px;top:113px;width:9px;height:1px;background:#444"></div>
<div style="position:absolute;left:234px;top:110px;width:16px;height:5px;background:#ece81a"></div>
<div class="t" style="left:270.00px;top:104.80px;font-size:15px;font-weight:normal;font-style:normal;color:#444;transform:scaleX(1.3000);-webkit-text-stroke:0.1px #444;">A</div>
<div style="position:absolute;left:268px;top:110px;width:16px;height:5px;background:#d9141b"></div>
<div style="position:absolute;left:352px;top:63px;width:22px;height:24px;background:#9fd5b7"></div>
<div style="position:absolute;left:330px;top:95px;width:22px;height:24px;background:#9fd5b7"></div>
<div style="position:absolute;left:436px;top:63px;width:227px;height:24px;background:#9fd5b7"></div>
<div style="position:absolute;left:436px;top:96px;width:146px;height:23px;background:#9fd5b7"></div>
<div class="t" style="left:457.04px;top:75.67px;font-size:12.5px;font-weight:normal;font-style:normal;color:#2c5a40;transform:scaleX(0.9560);-webkit-text-stroke:0.1px #2c5a40;">Renvoyer à la ligne automatiquement</div>
<div class="t" style="left:457.05px;top:108.17px;font-size:12.5px;font-weight:normal;font-style:normal;color:#2c5a40;transform:scaleX(0.9485);-webkit-text-stroke:0.1px #2c5a40;">Fusionner et centrer</div>
<div style="position:absolute;left:672px;top:63px;width:131px;height:24px;background:#fff;border:1px solid #c6c6c6;box-sizing:border-box"></div>
<div class="t" style="left:675.00px;top:74.90px;font-size:13px;font-weight:normal;font-style:normal;color:#222;transform:scaleX(0.8833);-webkit-text-stroke:0.3px #222;">Standard</div>
<div class="t" style="left:711.00px;top:107.80px;font-size:15px;font-weight:normal;font-style:normal;color:#555;transform:scaleX(0.9231);-webkit-text-stroke:0.1px #555;">%</div>
<div class="t" style="left:731.00px;top:107.03px;font-size:10px;font-weight:normal;font-style:normal;color:#555;transform:scaleX(0.8760);-webkit-text-stroke:0.1px #555;">000</div>
<div class="t" style="left:766.00px;top:102.05px;font-size:8.5px;font-weight:normal;font-style:normal;color:#555;transform:scaleX(1.3584);-webkit-text-stroke:0.1px #555;">,0</div>
<div class="t" style="left:766.00px;top:110.05px;font-size:8.5px;font-weight:normal;font-style:normal;color:#555;transform:scaleX(0.8272);-webkit-text-stroke:0.1px #555;">,00</div>
<div class="t" style="left:788.00px;top:102.05px;font-size:8.5px;font-weight:normal;font-style:normal;color:#555;transform:scaleX(0.8272);-webkit-text-stroke:0.1px #555;">,00</div>
<div class="t" style="left:790.00px;top:110.05px;font-size:8.5px;font-weight:normal;font-style:normal;color:#555;transform:scaleX(1.0867);-webkit-text-stroke:0.1px #555;">,0</div>
<div class="t" style="left:817.84px;top:102.17px;font-size:12.5px;font-weight:normal;font-style:normal;color:#404040;transform:scaleX(0.9611);-webkit-text-stroke:0.1px #404040;">Mise en forme</div>
<div class="t" style="left:814.75px;top:118.87px;font-size:12.5px;font-weight:normal;font-style:normal;color:#404040;transform:scaleX(0.9877);-webkit-text-stroke:0.1px #404040;">conditionnelle</div>
<div class="t" style="left:902.64px;top:102.17px;font-size:12.5px;font-weight:normal;font-style:normal;color:#404040;transform:scaleX(0.9632);-webkit-text-stroke:0.1px #404040;">Mettre sous forme</div>
<div class="t" style="left:920.40px;top:118.87px;font-size:12.5px;font-weight:normal;font-style:normal;color:#404040;transform:scaleX(0.9258);-webkit-text-stroke:0.1px #404040;">de tableau</div>
<div class="t" style="left:1006.20px;top:102.17px;font-size:12.5px;font-weight:normal;font-style:normal;color:#404040;transform:scaleX(0.8899);-webkit-text-stroke:0.1px #404040;">Styles de</div>
<div class="t" style="left:1005.70px;top:118.87px;font-size:12.5px;font-weight:normal;font-style:normal;color:#404040;transform:scaleX(0.9219);-webkit-text-stroke:0.1px #404040;">cellules</div>
<div class="t" style="left:1066.08px;top:102.17px;font-size:12.5px;font-weight:normal;font-style:normal;color:#404040;transform:scaleX(0.9221);-webkit-text-stroke:0.1px #404040;">Insérer</div>
<div class="t" style="left:1108.40px;top:102.17px;font-size:12.5px;font-weight:normal;font-style:normal;color:#404040;transform:scaleX(0.9461);-webkit-text-stroke:0.1px #404040;">Supprimer</div>
<div class="t" style="left:1167.85px;top:102.17px;font-size:12.5px;font-weight:normal;font-style:normal;color:#404040;transform:scaleX(0.9485);-webkit-text-stroke:0.1px #404040;">Format</div>
<div class="t" style="left:1240.50px;top:66.67px;font-size:12.5px;font-weight:normal;font-style:normal;color:#404040;transform:scaleX(0.9637);-webkit-text-stroke:0.1px #404040;">Somme automatique</div>
<div class="t" style="left:1239.58px;top:90.67px;font-size:12.5px;font-weight:normal;font-style:normal;color:#404040;transform:scaleX(0.9186);-webkit-text-stroke:0.1px #404040;">Remplissage</div>
<div class="t" style="left:1239.58px;top:114.67px;font-size:12.5px;font-weight:normal;font-style:normal;color:#404040;transform:scaleX(0.9186);-webkit-text-stroke:0.1px #404040;">Effacer</div>
<div class="t" style="left:1375.00px;top:102.07px;font-size:12.5px;font-weight:normal;font-style:normal;color:#404040;transform:scaleX(0.9029);-webkit-text-stroke:0.1px #404040;">Trier et</div>
<div class="t" style="left:1375.30px;top:118.67px;font-size:12.5px;font-weight:normal;font-style:normal;color:#404040;transform:scaleX(1.0031);-webkit-text-stroke:0.1px #404040;">filtrer</div>
<div class="t" style="left:1415.69px;top:102.07px;font-size:12.5px;font-weight:normal;font-style:normal;color:#404040;transform:scaleX(0.9111);-webkit-text-stroke:0.1px #404040;">Rechercher et</div>
<div class="t" style="left:1416.60px;top:118.67px;font-size:12.5px;font-weight:normal;font-style:normal;color:#404040;transform:scaleX(0.9429);-webkit-text-stroke:0.1px #404040;">sélectionner</div>
<div class="t" style="left:1378.00px;top:68.65px;font-size:14px;font-weight:bold;font-style:normal;color:#4a78b8;transform:scaleX(1.1000);">A</div>
<div class="t" style="left:1379.00px;top:83.82px;font-size:13.5px;font-weight:bold;font-style:normal;color:#9b6cc4;transform:scaleX(1.1250);">Z</div>
<div class="t" style="left:1463.00px;top:12.15px;font-size:14px;font-weight:bold;font-style:normal;color:#444;">?</div>
<div style="position:absolute;left:1576px;top:26px;width:24px;height:26px;background:#c8c8c8"></div>
<svg style="position:absolute;left:0px;top:0px" width="1600" height="900" viewBox="0 0 1600 900"><path d="M27.0 116.5 L33.0 116.5 L30 119.5 Z" fill="#555"/><path d="M75.0 88.5 L81.0 88.5 L78 91.5 Z" fill="#555"/><path d="M85.5 142.5 L85.5 135.5 L92.5 135.5" fill="none" stroke="#777" stroke-width="1"/><path d="M87.5 137.5 L92.0 142.0 M92.5 138.5 L92.5 142.5 L88.5 142.5" fill="none" stroke="#777" stroke-width="1.2"/><path d="M292.5 142.5 L292.5 135.5 L299.5 135.5" fill="none" stroke="#777" stroke-width="1"/><path d="M294.5 137.5 L299.0 142.0 M299.5 138.5 L299.5 142.5 L295.5 142.5" fill="none" stroke="#777" stroke-width="1.2"/><path d="M656.5 142.5 L656.5 135.5 L663.5 135.5" fill="none" stroke="#777" stroke-width="1"/><path d="M658.5 137.5 L663.0 142.0 M663.5 138.5 L663.5 142.5 L659.5 142.5" fill="none" stroke="#777" stroke-width="1.2"/><path d="M797.5 142.5 L797.5 135.5 L804.5 135.5" fill="none" stroke="#777" stroke-width="1"/><path d="M799.5 137.5 L804.0 142.0 M804.5 138.5 L804.5 142.5 L800.5 142.5" fill="none" stroke="#777" stroke-width="1.2"/><path d="M201.5 73.5 L206.5 73.5 L204 76.5 Z" fill="#555"/><path d="M244.5 73.5 L249.5 73.5 L247 76.5 Z" fill="#555"/><path d="M273 68 L276 65 L279 68 Z" fill="#555"/><path d="M293 66 L299 66 L296 69 Z" fill="#555"/><text x="129" y="111.5" font-family="Liberation Serif" font-style="italic" font-weight="bold" font-size="14" fill="#444">I</text><path d="M169.5 105.5 L174.5 105.5 L172 108.5 Z" fill="#555"/><path d="M212.5 105.5 L217.5 105.5 L215 108.5 Z" fill="#555"/><path d="M256.5 105.5 L261.5 105.5 L259 108.5 Z" fill="#555"/><path d="M289.5 105.5 L294.5 105.5 L292 108.5 Z" fill="#555"/><g fill="none" stroke="#666" stroke-width="1.2"><rect x="192.5" y="99.5" width="13" height="13"/><path d="M199 99.5 V112.5 M192.5 106 H205.5"/></g><path d="M238 104 L243 98.5 L248.5 104 L243 109.5 Z" fill="#fff" stroke="#555" stroke-width="1.2"/><path d="M242 97 L242 101" stroke="#555" stroke-width="1.2"/><path d="M248 101 Q251 103 249.5 107" stroke="#3d6fb0" stroke-width="2" fill="none"/><rect x="312" y="66" width="14" height="1.4" fill="#666"/><rect x="312" y="69" width="14" height="1.4" fill="#666"/><rect x="312" y="72" width="14" height="1.4" fill="#666"/><rect x="334" y="70" width="14" height="1.4" fill="#666"/><rect x="334" y="73" width="14" height="1.4" fill="#666"/><rect x="334" y="76" width="14" height="1.4" fill="#666"/><rect x="356" y="75" width="14" height="1.4" fill="#4e7a62"/><rect x="356" y="78" width="14" height="1.4" fill="#4e7a62"/><rect x="356" y="81" width="14" height="1.4" fill="#4e7a62"/><text x="0" y="0" transform="translate(387.5,78.5) rotate(-45)" font-family="Liberation Sans" font-size="9.5" fill="#555">ab</text><path d="M392 84 L403.5 72.5" stroke="#555" stroke-width="1.2" fill="none"/><path d="M404.5 71.5 L399.5 72.5 L403.5 76.5 Z" fill="#555"/><path d="M405.5 73.5 L410.5 73.5 L408 76.5 Z" fill="#555"/><rect x="312" y="101" width="14" height="1.4" fill="#666"/><rect x="312" y="104" width="9" height="1.4" fill="#666"/><rect x="312" y="107" width="14" height="1.4" fill="#666"/><rect x="312" y="110" width="9" height="1.4" fill="#666"/><rect x="334" y="101" width="14" height="1.4" fill="#4e7a62"/><rect x="336.5" y="104" width="9" height="1.4" fill="#4e7a62"/><rect x="334" y="107" width="14" height="1.4" fill="#4e7a62"/><rect x="336.5" y="110" width="9" height="1.4" fill="#4e7a62"/><rect x="356" y="101" width="14" height="1.4" fill="#666"/><rect x="361" y="104" width="9" height="1.4" fill="#666"/><rect x="356" y="107" width="14" height="1.4" fill="#666"/><rect x="361" y="110" width="9" height="1.4" fill="#666"/><rect x="388" y="101" width="14" height="1.4" fill="#666"/><rect x="391" y="104" width="9" height="1.4" fill="#666"/><rect x="391" y="107" width="9" height="1.4" fill="#666"/><rect x="388" y="110" width="14" height="1.4" fill="#666"/><path d="M386 106 L391 102.5 L391 109.5 Z" fill="#3d6fb0"/><rect x="389" y="105.3" width="6" height="1.6" fill="#3d6fb0"/><rect x="410" y="101" width="14" height="1.4" fill="#666"/><rect x="415" y="104" width="9" height="1.4" fill="#666"/><rect x="415" y="107" width="9" height="1.4" fill="#666"/><rect x="410" y="110" width="14" height="1.4" fill="#666"/><path d="M414 106 L409 102.5 L409 109.5 Z" fill="#3d6fb0"/><rect x="405" y="105.3" width="6" height="1.6" fill="#3d6fb0"/><g fill="none" stroke="#555" stroke-width="1.1"><rect x="439.5" y="66.5" width="10" height="4"/><rect x="439.5" y="75.5" width="10" height="7"/><path d="M441.5 78.5 H447.5 M441.5 80.5 H447.5"/></g><path d="M451 68.5 H455 Q456.5 72 452 75" stroke="#3d6fb0" stroke-width="1.4" fill="none"/><path d="M450 73 L452.5 76.5 L454 72.5 Z" fill="#3d6fb0"/><g fill="none" stroke="#555" stroke-width="1.1"><rect x="439.5" y="98.5" width="15" height="15"/><path d="M439.5 102.5 H454.5 M439.5 109.5 H454.5 M447 98.5 V102.5 M447 109.5 V113.5"/></g><path d="M442 106 H452" stroke="#555" stroke-width="1.1"/><path d="M441.5 106 L444 104 L444 108 Z M452.5 106 L450 104 L450 108 Z" fill="#555"/><path d="M573.25 106.5 L578.25 106.5 L575.75 109.5 Z" fill="#444"/><path d="M792.5 73.5 L797.5 73.5 L795 76.5 Z" fill="#555"/><rect x="675.5" y="98.5" width="15" height="8" fill="#fff" stroke="#3d6fb0" stroke-width="1.3"/><circle cx="683" cy="102.5" r="2" fill="#3d6fb0"/><rect x="681" y="107" width="9" height="2.5" fill="#e8c07a"/><rect x="678" y="110.5" width="9" height="2.5" fill="#e8c07a"/><rect x="680" y="113.5" width="7" height="1.5" fill="#e8c07a"/><path d="M696.5 105.5 L701.5 105.5 L699 108.5 Z" fill="#555"/><path d="M762 102 L768 102" stroke="#3d6fb0" stroke-width="1.3"/><path d="M762 102 L765 99.5 L765 104.5 Z" fill="#3d6fb0"/><path d="M783 110 L789 110" stroke="#3d6fb0" stroke-width="1.3"/><path d="M790 110 L787 107.5 L787 112.5 Z" fill="#3d6fb0"/><path d="M893.5 117.5 L898.5 117.5 L896 120.5 Z" fill="#555"/><path d="M977.5 117.5 L982.5 117.5 L980 120.5 Z" fill="#555"/><path d="M1046.5 117.5 L1051.5 117.5 L1049 120.5 Z" fill="#555"/><g fill="#fff" stroke="#888" stroke-width="1"><rect x="842.5" y="60.5" width="28" height="24"/></g><g stroke="#999" stroke-width="1"><path d="M842.5 66.5 H870.5 M842.5 72.5 H870.5 M842.5 78.5 H870.5 M849.5 60.5 V84.5 M856.5 60.5 V84.5 M863.5 60.5 V84.5"/></g><rect x="850" y="61" width="6" height="5" fill="#d24726"/><rect x="850" y="67" width="13" height="5" fill="#3d6fb0"/><rect x="850" y="73" width="8" height="5" fill="#d24726"/><rect x="850" y="79" width="4" height="5" fill="#3d6fb0"/><rect x="856.5" y="78.5" width="15" height="12" fill="#fff" stroke="#666" stroke-width="1"/><text x="859.5" y="88.5" font-family="Liberation Sans" font-size="10" fill="#444">≠</text><rect x="939.5" y="62.5" width="23" height="20" fill="#fff" stroke="#888"/><rect x="944" y="66" width="18" height="16" fill="#c9d3e3"/><g stroke="#999" stroke-width="1"><path d="M939.5 67.5 H962.5 M939.5 72.5 H962.5 M939.5 77.5 H962.5 M945.5 62.5 V82.5 M951.5 62.5 V82.5 M957.5 62.5 V82.5"/></g><path d="M952 86 L965 71 L968 74 L956 88 Z" fill="#777"/><path d="M946 91 Q947 84 952 84 Q956 86 953 90 Z" fill="#3d6fb0"/><rect x="1015.5" y="60.5" width="25" height="22" fill="#fff" stroke="#888"/><rect x="1020" y="66" width="15" height="11" fill="#b7c7df"/><g stroke="#999" stroke-width="1"><path d="M1015.5 65.5 H1040.5 M1015.5 77.5 H1040.5 M1020.5 60.5 V82.5 M1035.5 60.5 V82.5"/></g><path d="M1027 85 L1041 70 L1044 73 L1031 87 Z" fill="#777"/><path d="M1021 90 Q1022 83 1027 83 Q1031 85 1028 89 Z" fill="#3d6fb0"/><path d="M1081.5 116.5 L1086.5 116.5 L1084 119.5 Z" fill="#555"/><path d="M1132.5 116.5 L1137.5 116.5 L1135 119.5 Z" fill="#555"/><path d="M1184.5 116.5 L1189.5 116.5 L1187 119.5 Z" fill="#555"/><g fill="#fff" stroke="#777" stroke-width="1"><rect x="1072.5" y="60.5" width="14" height="5"/><rect x="1072.5" y="60.5" width="7" height="5"/><rect x="1072.5" y="77.5" width="14" height="10"/><path d="M1072.5 82.5 H1086.5 M1079.5 77.5 V87.5"/></g><rect x="1083.5" y="68.5" width="14" height="5" fill="#c9d3e3" stroke="#888"/><path d="M1090.5 68.5 V73.5" stroke="#888"/><path d="M1073 71 H1080" stroke="#3d6fb0" stroke-width="1.5"/><path d="M1073 71 L1076 68 L1076 74 Z" fill="#3d6fb0"/><g fill="#fff" stroke="#777" stroke-width="1"><rect x="1122.5" y="60.5" width="14" height="5"/><rect x="1122.5" y="60.5" width="7" height="5"/><rect x="1122.5" y="78.5" width="14" height="10"/><path d="M1122.5 83.5 H1136.5 M1129.5 78.5 V88.5"/></g><rect x="1128.5" y="69.5" width="9" height="4" fill="#c9d3e3" stroke="#888"/><path d="M1138 66 L1150 79 M1150 66 L1137 80" stroke="#d24726" stroke-width="2"/><path d="M1174 60 V64 M1200 60 V64 M1175 62 H1199" stroke="#3d6fb0" stroke-width="1.1"/><path d="M1175 62 L1178 60 L1178 64 Z M1199 62 L1196 60 L1196 64 Z" fill="#3d6fb0"/><g fill="#fff" stroke="#888" stroke-width="1"><rect x="1173.5" y="66.5" width="27" height="21"/><path d="M1173.5 71.5 H1200.5 M1173.5 81.5 H1200.5 M1180.5 66.5 V87.5 M1187.5 66.5 V87.5 M1194.5 66.5 V87.5"/><path d="M1173.5 87.5 V91 H1180 L1182 88 H1187 M1187.5 87.5 V90.5 H1194"/></g><rect x="1181" y="72" width="6" height="9" fill="#3d6fb0"/><path d="M1361.5 65.5 L1366.5 65.5 L1364 68.5 Z" fill="#555"/><path d="M1309.5 89.5 L1314.5 89.5 L1312 92.5 Z" fill="#555"/><path d="M1279.5 113.5 L1284.5 113.5 L1282 116.5 Z" fill="#555"/><path d="M1235.5 61.5 V59 H1222.5 L1229 66 L1222.5 73 H1235.5 V70.5" fill="none" stroke="#3a3a3a" stroke-width="1.9"/><rect x="1222.5" y="82.5" width="13" height="14" fill="#fff" stroke="#777"/><rect x="1222" y="82" width="14" height="3" fill="#777"/><path d="M1229 87 V94 M1226 91 L1229 94 L1232 91" stroke="#3d6fb0" stroke-width="1.5" fill="none"/><path d="M1224 117 L1231 109 L1236 113 L1229 121 Z" fill="#e58a9a"/><path d="M1223 121 H1236" stroke="#aaa" stroke-width="1"/><path d="M1406.5 117.5 L1411.5 117.5 L1409 120.5 Z" fill="#555"/><path d="M1483.5 117.5 L1488.5 117.5 L1486 120.5 Z" fill="#555"/><path d="M1390 67 H1407 L1400.5 74 V83 L1397 81 V74 Z" fill="#777"/><g fill="#666"><rect x="1443" y="62" width="5" height="6"/><rect x="1456" y="62" width="5" height="6"/><path d="M1440 68 H1450 V86 H1439 Z M1454 68 H1465 L1466 86 H1454 Z"/><rect x="1448" y="72" width="8" height="6"/></g><g fill="#f8f8f8"><rect x="1441" y="76" width="2" height="9"/><rect x="1462" y="76" width="2" height="9"/></g><path d="M1581 141 L1585 137 L1589 141" stroke="#444" stroke-width="1.6" fill="none"/><rect x="18" y="63" width="23" height="26" rx="1" fill="#e8c07a"/><rect x="23" y="60" width="14" height="5" rx="1" fill="#666"/><rect x="28" y="58" width="4" height="3" fill="#666"/><path d="M32.5 72.5 H42 L46.5 77 V91.5 H32.5 Z" fill="#fff" stroke="#666" stroke-width="1"/><path d="M42 72.5 V77 H46.5" fill="none" stroke="#666"/><g fill="none" stroke="#5f7084" stroke-width="1.6"><circle cx="57.5" cy="71" r="2.7"/><circle cx="66.5" cy="71" r="2.7"/><path d="M59 68.5 L66 58 M65 68.5 L58 58"/></g><g fill="#fff" stroke="#666" stroke-width="1"><path d="M54.5 83.5 H60 L62 85.5 V93.5 H54.5 Z"/><path d="M59.5 87.5 H65.5 L68.5 90.5 V97.5 H59.5 Z"/></g><path d="M61 91 H66 M61 93 H66 M61 95 H66 M56 87 H59 M56 89 H59" stroke="#3d6fb0" stroke-width="0.9"/><path d="M63 113 L67 109 L70 112 L66 116 Z" fill="#555"/><path d="M55 118 L62 112 L66 116 L59 122 Z" fill="#dcb779"/><rect x="18.5" y="5.5" width="7" height="12" fill="#fff" stroke="#1d6e42" stroke-width="1"/><path d="M20 8 H24.5 M20 10 H24.5 M20 12 H24.5 M20 14 H24.5 M22 6 V17" stroke="#1d6e42" stroke-width="0.7"/><path d="M10 5 L20 3 L20 19 L10 17 Z" fill="#1d6e42"/><path d="M12 7.5 L17.5 14.5 M17.5 7.5 L12 14.5" stroke="#fff" stroke-width="1.8"/><rect x="40" y="4" width="14" height="14" rx="1" fill="#7d56a0"/><rect x="42.5" y="5.5" width="9" height="5.5" fill="#efe6f4"/><rect x="43.5" y="14" width="7" height="4" fill="#fff"/><rect x="45" y="15" width="2" height="3" fill="#7d56a0"/><path d="M70 9.5 H77 Q82 9.5 82 13 Q82 16.5 77.5 16.5 H76" fill="none" stroke="#4a74ad" stroke-width="2"/><path d="M73.5 5.5 L69.5 9.5 L73.5 13.5" fill="none" stroke="#4a74ad" stroke-width="2"/><path d="M89.5 9.5 L94.5 9.5 L92 12.5 Z" fill="#555"/><path d="M121 9.5 H114 Q109 9.5 109 13 Q109 16.5 113.5 16.5 H115" fill="none" stroke="#bdbdbd" stroke-width="2"/><path d="M117.5 5.5 L121.5 9.5 L117.5 13.5" fill="none" stroke="#bdbdbd" stroke-width="2"/><path d="M128.5 9.5 L133.5 9.5 L131 12.5 Z" fill="#bbb"/><rect x="147" y="8" width="6" height="1.3" fill="#444"/><path d="M147.0 10.5 L153.0 10.5 L150 13.5 Z" fill="#444"/><rect x="1491.5" y="6.5" width="13" height="10" fill="none" stroke="#444" stroke-width="1.1"/><path d="M1491.5 8.5 H1504.5" stroke="#444" stroke-width="1"/><path d="M1498 15 V10 M1495.5 12 L1498 9.5 L1500.5 12" stroke="#444" stroke-width="1.1" fill="none"/><rect x="1521" y="12" width="11" height="2" fill="#444"/><g fill="none" stroke="#444" stroke-width="1.3"><rect x="1551.5" y="9.5" width="7" height="7"/><path d="M1554 9.5 V7 H1561 V14 H1558.5"/></g><path d="M1579.5 6.5 L1590.5 17.5 M1590.5 6.5 L1579.5 17.5" stroke="#444" stroke-width="1.8"/><circle cx="1588.5" cy="34" r="5" fill="#fff"/><path d="M1579 52 Q1579 41 1588.5 41 Q1598 41 1598 52 Z" fill="#fff"/></svg>
<svg style="position:absolute;left:0px;top:0px" width="1600" height="900" viewBox="0 0 1600 900">
<defs>
<linearGradient id="lg1" x1="0" y1="0" x2="0" y2="1">
  <stop offset="0" stop-color="#e2f0ca"/>
  <stop offset="0.2" stop-color="#c6e2a0"/>
  <stop offset="0.44" stop-color="#acd67e"/>
  <stop offset="0.52" stop-color="#86c552"/>
  <stop offset="0.75" stop-color="#92cb62"/>
  <stop offset="0.92" stop-color="#7fc04e"/>
  <stop offset="1" stop-color="#62a838"/>
</linearGradient>
<radialGradient id="lg3" cx="0.45" cy="0.42" r="0.58">
  <stop offset="0.7" stop-color="#3f8a22" stop-opacity="0"/>
  <stop offset="1" stop-color="#3f8a22" stop-opacity="0.45"/>
</radialGradient>
<radialGradient id="lg2" cx="0.3" cy="0.2" r="0.5">
  <stop offset="0" stop-color="#ffffff" stop-opacity="0.9"/>
  <stop offset="1" stop-color="#ffffff" stop-opacity="0"/>
</radialGradient>
<filter id="blur1" x="-20%" y="-20%" width="140%" height="140%"><feGaussianBlur stdDeviation="1.5"/></filter>
</defs>
<circle cx="93" cy="287" r="62" fill="#3d6b25" opacity="0.35" filter="url(#blur1)"/>
<circle cx="91" cy="284.5" r="62.7" fill="url(#lg1)"/><circle cx="91" cy="284.5" r="62.7" fill="url(#lg3)"/>

<filter id="blur3" x="-50%" y="-50%" width="200%" height="200%"><feGaussianBlur stdDeviation="3.5"/></filter><path d="M30 300 A64 64 0 0 1 110 222" fill="none" stroke="#ffffff" stroke-width="8" stroke-opacity="0.9" filter="url(#blur3)"/>
<g fill="none" stroke-linejoin="bevel" stroke-linecap="butt">
<g transform="translate(1.5,1.8)" stroke="#4a6a2c" stroke-opacity="0.6">
<path d="M88.5 315.9 H64.8 V277.7 H53 L91 239.6 L129.5 277.7 H119.7 V315.9 H93.5" stroke-width="5.5"/>
<path d="M92.4 314.5 C98 309 104 304 107 295 C110 285 108 274 100 266 C94 260 86 257 81.6 257 C84 259 86 264 85.4 268 C83 274 77 281 76.9 288 C77 296 81 301 86.2 303 C91 300 94.5 293 94.8 285 C95 279 93 274 91 271" stroke-width="4.2" stroke-linecap="round"/>

</g>
<g stroke="#fbfdf6">
<path d="M88.5 315.9 H64.8 V277.7 H53 L91 239.6 L129.5 277.7 H119.7 V315.9 H93.5" stroke-width="5.5"/>
<path d="M92.4 314.5 C98 309 104 304 107 295 C110 285 108 274 100 266 C94 260 86 257 81.6 257 C84 259 86 264 85.4 268 C83 274 77 281 76.9 288 C77 296 81 301 86.2 303 C91 300 94.5 293 94.8 285 C95 279 93 274 91 271" stroke-width="4.2" stroke-linecap="round"/>

</g>
</g>
</svg>
<svg style="position:absolute;left:0px;top:0px" width="1600" height="900" viewBox="0 0 1600 900">
<defs><radialGradient id="cy" cx="0.5" cy="0.5" r="0.5">
<stop offset="0" stop-color="#f4f07a" stop-opacity="0.85"/>
<stop offset="0.75" stop-color="#f4f07a" stop-opacity="0.8"/>
<stop offset="1" stop-color="#f4f07a" stop-opacity="0"/>
</radialGradient></defs>
<circle cx="534" cy="438.5" r="17" fill="url(#cy)"/>
<path d="M531 432.5 H538 V436.5 H542 V443.5 H538 V447.5 H531 V443.5 H527 V436.5 H531 Z" fill="#fff" stroke="#000" stroke-width="1.3"/>
</svg>
</body></html>
